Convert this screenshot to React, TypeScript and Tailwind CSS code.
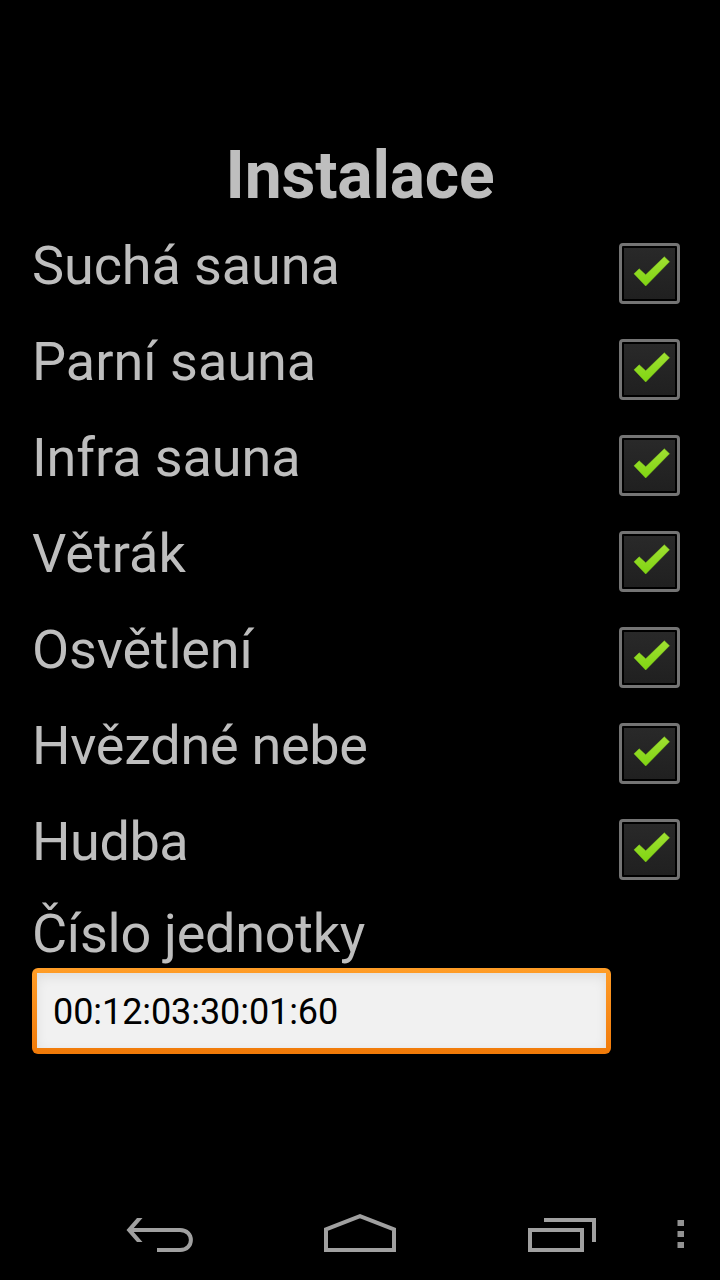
import React, { useState } from 'react'

const items = [
  { label: 'Suchá sauna', spacing: 'tracking-[-0.1px]' },
  { label: 'Parní sauna', spacing: 'tracking-[0px]' },
  { label: 'Infra sauna', spacing: 'tracking-[-0.1px]' },
  { label: 'Větrák', spacing: 'tracking-[0.05px]' },
  { label: 'Osvětlení', spacing: 'tracking-[-0.15px]' },
  { label: 'Hvězdné nebe', spacing: 'tracking-[-0.28px]' },
  { label: 'Hudba', spacing: 'tracking-[-0.45px]' },
]

const CheckMark = () => (
  <svg width="51" height="51" viewBox="5 5 51 51" className="shrink-0">
    <defs>
      <linearGradient id="check" x1="0" y1="0" x2="0" y2="1">
        <stop offset="0" stopColor="#a0e032" />
        <stop offset="1" stopColor="#80d412" />
      </linearGradient>
    </defs>
    <path
      d="M15 30.800 L20.200 25.800 L26.700 31.800 L45.300 13.700 L50.500 18.700 L26.700 43 Z"
      fill="url(#check)"
      stroke="#80cc1c"
      strokeOpacity="0.6"
      strokeWidth="0.8"
      strokeLinejoin="round"
    />
  </svg>
)

const Checkbox = () => {
  const [checked, setChecked] = useState(true)
  return (
    <button
      type="button"
      role="checkbox"
      aria-checked={checked}
      onClick={() => setChecked(!checked)}
      className="mt-[17px] flex h-[61px] w-[61px] items-center justify-center rounded-[4px] border-[3px] border-[#747474] bg-black"
    >
      <span className="flex h-[51px] w-[51px] shrink-0 items-center justify-center bg-linear-to-b from-[#292929] to-[#202020]">
        {checked && <CheckMark />}
      </span>
    </button>
  )
}

const NavBar = () => (
  <nav className="flex h-24 w-full items-center">
    <svg width="720" height="96" viewBox="0 1184 720 96" fill="none" stroke="#a0a0a0" strokeWidth="4">
      <path d="M137 1218 H142.500 L132 1230 L142.500 1242 H137 L126.500 1230 Z" fill="#a0a0a0" stroke="none" />
      <path d="M130 1230 H180 C194.500 1230 194.500 1250 180 1250 H157" />
      <path d="M326 1229.300 L360 1216.200 L394 1229.300 V1250 H326 Z" />
      <path d="M530 1230 H582 V1250 H530 Z M544 1220 H594 V1242" />
      <path d="M677.500 1223 H684 M677.500 1234 H684 M677.500 1245 H684" stroke="#929292" strokeWidth="6" />
    </svg>
  </nav>
)

const App: React.FC = () => {
  const [unit, setUnit] = useState('00:12:03:30:01:60')

  return (
    <div className="flex h-[1280px] w-[720px] flex-col overflow-hidden bg-black font-[Roboto,sans-serif] text-[#bebebe]">
      <main className="flex grow flex-col px-8 pt-[125px]">
        <h1 className="text-center text-[66px] leading-[101px] font-bold tracking-[-0.2px]">Instalace</h1>

        {items.map((item) => (
          <div key={item.label} className="flex h-24 items-start justify-between pr-2">
            <span className={`text-[54px] leading-[79px] ${item.spacing}`}>{item.label}</span>
            <Checkbox />
          </div>
        ))}

        {/* Číslo jednotky */}
        <label htmlFor="unit" className="mt-[4px] h-[66px] text-[54px] leading-[64px] tracking-[-0.28px]">
          Číslo jednotky
        </label>
        <div className="h-[85.5px] w-[579px] rounded-[6px] bg-linear-to-b from-[#ff9d27] to-[#f07a08] p-[5px]">
          <input
            id="unit"
            value={unit}
            onChange={(e) => setUnit(e.target.value)}
            className="block h-[75px] w-full bg-[#f1f1f1] pt-[2px] pl-4 text-[36px] tracking-[-0.07px] text-black shadow-[inset_0_4px_12px_rgba(0,0,0,0.08)] outline-none"
          />
        </div>
      </main>
      <NavBar />
    </div>
  )
}

export default App
